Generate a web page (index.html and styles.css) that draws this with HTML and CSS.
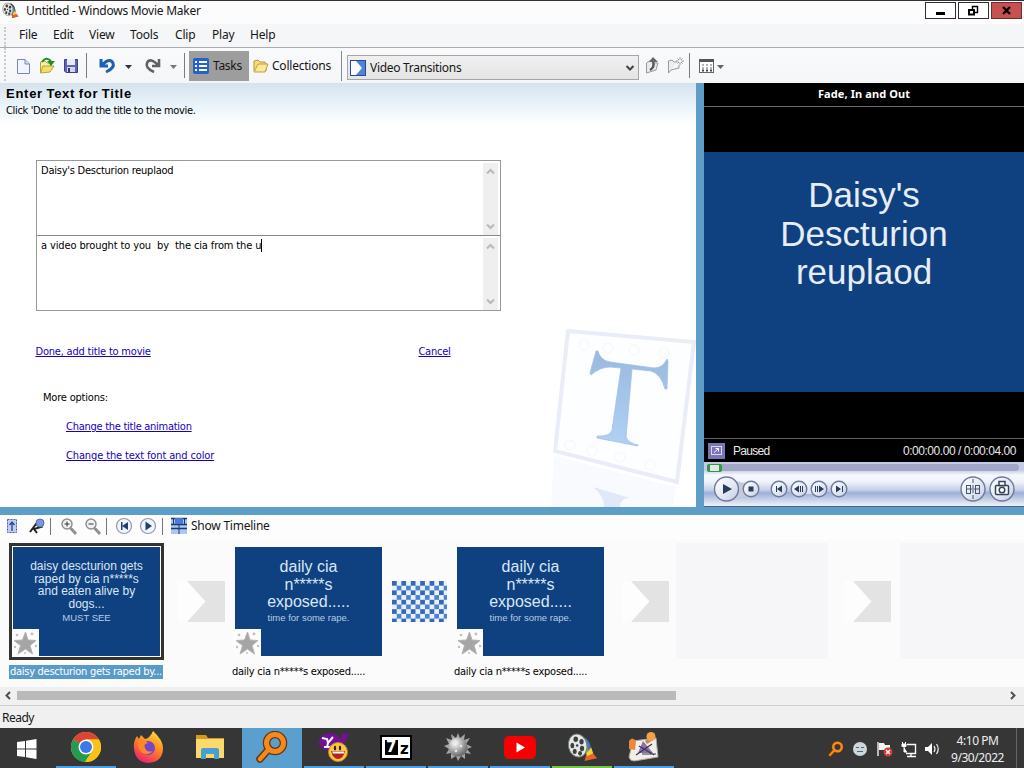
FILE: index.html
```html
<!DOCTYPE html>
<html lang="en">
<head>
<meta charset="utf-8">
<title>Untitled - Windows Movie Maker</title>
<link rel="stylesheet" href="styles.css">
</head>
<body>
<svg class="defs" width="0" height="0">
  <defs>
    <linearGradient id="silver" x1="0" y1="0" x2="1" y2="1"><stop offset="0" stop-color="#fff"/><stop offset=".55" stop-color="#e3e8f4"/><stop offset="1" stop-color="#c3cce4"/></linearGradient>
    <linearGradient id="tgrad" x1="0" y1="0" x2="0" y2="1"><stop offset="0" stop-color="#9bb9e0"/><stop offset="1" stop-color="#b0d0f4"/></linearGradient>
    <linearGradient id="fox" x1=".8" y1="0" x2=".3" y2="1"><stop offset="0" stop-color="#ffe141"/><stop offset=".45" stop-color="#ff8a1e"/><stop offset="1" stop-color="#ee1f6e"/></linearGradient>
    <radialGradient id="ball" cx=".35" cy=".3" r=".8"><stop offset="0" stop-color="#fff"/><stop offset=".5" stop-color="#a9a9a9"/><stop offset="1" stop-color="#555"/></radialGradient>
    <pattern id="check" width="9.4" height="9.4" patternUnits="userSpaceOnUse"><rect width="9.4" height="9.4" fill="#e9f1fb"/><rect width="4.7" height="4.7" fill="#3568b8"/><rect x="4.7" y="4.7" width="4.7" height="4.7" fill="#4c84d0"/></pattern>
    <symbol id="reel" viewBox="0 0 32 32">
      <path d="M11 3L18 3Q27 10 25 22L31 27L20 30Z" fill="#33383a"/>
      <path d="M16 4Q24 9 23 21L20 25Q19 12 14 5Z" fill="#6ea83c"/>
      <path d="M19 6Q26 12 25 21L22 24Q23 14 19 7Z" fill="#466fc4"/>
      <path d="M20 23L26 21L31 27L18 30Z" fill="#e8632a"/><path d="M20 22L25 16L27 22L21 25Z" fill="#f3cf38"/>
      <ellipse cx="11" cy="14" rx="9.5" ry="12" fill="#e6e8e6" stroke="#777" transform="rotate(-12 11 14)"/>
      <g fill="#3c4040"><ellipse cx="9" cy="7.5" rx="2.4" ry="2.8"/><ellipse cx="15" cy="10" rx="2.2" ry="2.8"/><ellipse cx="5.5" cy="14" rx="2" ry="2.8"/><ellipse cx="15.5" cy="17" rx="2.2" ry="2.8"/><ellipse cx="8" cy="20" rx="2.1" ry="2.7"/><ellipse cx="13.5" cy="22" rx="2" ry="2.4"/><circle cx="10.5" cy="14" r="1.3"/></g>
    </symbol>
    <symbol id="star" viewBox="0 0 27 27">
      <rect width="27" height="27" fill="#fcfcfc"/>
      <path d="M13.5 3L16 11L24 11.500L18 16.500L20.500 25L13.500 20L6 25L8.500 16.500L2 11.500L10.500 11Z" fill="#a5a5a5" stroke="#b3b3b3"/>
      <g fill="#c0c0c0"><circle cx="5" cy="6" r="1.3"/><circle cx="20" cy="5" r="1.4"/><circle cx="24" cy="17" r="1.2"/><circle cx="3" cy="18" r="1.2"/><circle cx="13" cy="24" r="1"/></g>
    </symbol>
    <symbol id="arrow" viewBox="0 0 55 41"><path d="M8 0H18L35.500 20.500L18 41H8Z" fill="#fdfdfd"/><path d="M17 0H55V41H17L35.500 20.500Z" fill="#e3e3e3"/></symbol>
    <symbol id="lens" viewBox="0 0 32 32"><path d="M4 28L13 18" stroke="#66350d" stroke-width="7.5" stroke-linecap="round"/><circle cx="19" cy="12" r="8.5" fill="none" stroke="#66350d" stroke-width="7.5"/><path d="M4 28L13 18" stroke="#f58a1c" stroke-width="4.5" stroke-linecap="round"/><circle cx="19" cy="12" r="8.5" fill="none" stroke="#f58a1c" stroke-width="5"/></symbol>
  </defs>
</svg>
<div class="window">
  <header class="titlebar">
    <svg class="app-icon" width="17" height="17"><use href="#reel"/></svg>
    <span class="title-text">Untitled - Windows Movie Maker</span>
    <div class="window-buttons">
      <span class="wbtn"><svg width="29" height="15"><rect x="10" y="9" width="9" height="3"/></svg></span>
      <span class="wbtn"><svg width="29" height="15" fill="none" stroke="#000"><path d="M13.500 6V3.500H18.500V9.500H16" stroke-width="1.4"/><rect x="10" y="7" width="5" height="4.5" stroke-width="2"/></svg></span>
      <span class="wbtn close"><svg width="29" height="15"><path d="M11 4L18 11M18 4L11 11" stroke="#000" stroke-width="2.3"/></svg></span>
    </div>
  </header>
  <nav class="menubar"><span class="m1">File</span><span class="m2">Edit</span><span class="m3">View</span><span class="m4">Tools</span><span class="m5">Clip</span><span class="m6">Play</span><span class="m7">Help</span></nav>
  <div class="toolbar">
    <svg class="tools-left" width="189" height="34">
      <path d="M17.500 11.500H25L29.500 16V25.500H17.500Z" fill="#f1f6ff" stroke="#7488b8"/><path d="M25 11.500V16H29.500" fill="#cbdcf8" stroke="#7488b8"/>
      <path d="M40.500 25V14L45 13L47 15H51V18" fill="#f9efa4" stroke="#b7a13f"/><path d="M40.500 25L43 18H54L50 24Z" fill="#f5df6c" stroke="#b7a13f"/><path d="M42 14Q46 8 51 13" fill="none" stroke="#248c29" stroke-width="2"/><path d="M47 13H55L51 18Z" fill="#248c29"/>
      <path d="M64.500 11.500H77.500V24.500H66L64.500 23Z" fill="#6264ae" stroke="#3d3f87"/><rect x="67" y="11" width="8" height="6" fill="#e6e9f8"/><rect x="67" y="19" width="8" height="5" fill="#d4d6e8"/><rect x="68" y="20" width="2" height="4" fill="#34367d"/>
      <path d="M86.500 5V30M184.500 5V30" stroke="#777b82"/>
      <path d="M101 11V18H108M102 17Q110 9 113 15Q115 20 106 24" fill="none" stroke="#1d61b8" stroke-width="3"/>
      <path d="M125 17H132L128.500 21Z" fill="#333"/>
      <path d="M159 11V18H152M158 17Q150 9 147 15Q145 20 154 24" fill="none" stroke="#606266" stroke-width="2.6"/>
      <path d="M170 17H177L173.500 21Z" fill="#777"/>
    </svg>
    <div class="tasks"><svg width="16" height="16"><rect width="16" height="16" rx="2" fill="#2460ce"/><path d="M2 4H4M2 8H4M2 12H4M6 4H14M6 8H14M6 12H14" stroke="#fff" stroke-width="2"/></svg><span>Tasks</span></div>
    <div class="collections"><svg width="16" height="15"><path d="M1 12V2L5 1L7 3H12L13 5V12Z" fill="#f9dc7e" stroke="#bd9441"/><path d="M1 13L5 5H15L12 13Z" fill="#fce999" stroke="#c79d3d"/></svg><span>Collections</span></div>
    <div class="combo"><svg width="16" height="16"><rect x=".5" y=".5" width="15" height="15" fill="#4e83d8" stroke="#244aa0"/><path d="M1 1H6L12 8L6 15H1Z" fill="#fff"/></svg><span>Video Transitions</span><svg class="chevron" width="10" height="8"><path d="M1.500 2L5 5.500L8.500 2" fill="none" stroke="#444" stroke-width="2"/></svg></div>
    <svg width="86" height="34">
      <path d="M7.500 25V15L12 12H15M7.500 25L17 22L19 15H16" fill="#e9e9e9" stroke="#999"/><path d="M11 22Q16 19 14 13" fill="none" stroke="#555" stroke-width="2.4"/><path d="M10 14L14 9L19 14Z" fill="#666"/>
      <path d="M29.500 25V13L33 12L35 14H38M29.500 25L32 22L40 20V17" fill="#eee" stroke="#999"/><path d="M41 9V17M37 13H45M38.500 10.500L43.500 15.500M43.500 10.500L38.500 15.500" stroke="#999"/><circle cx="41" cy="13" r="1.5" fill="#fff"/>
      <path d="M50.500 5V30" stroke="#777b82"/><rect x="60.500" y="12.500" width="14" height="12" fill="#fff" stroke="#666"/><path d="M60 12.500H75" stroke="#555" stroke-width="3"/><path d="M63 17H73M63 20H73" stroke="#999" stroke-width="1.5" stroke-dasharray="2"/><path d="M63 22.500H73" stroke="#444" stroke-width="2" stroke-dasharray="2"/><path d="M78 17H85L81.500 21Z" fill="#666"/>
    </svg>
  </div>
  <main class="workspace">
    <section class="task-pane">
      <svg class="watermark" width="146" height="182">
        <path d="M18 6L144 17L127 157L5 126Z" fill="#fdfeff" stroke="#e9edf8" stroke-width="4"/>
        <g fill="none" stroke="#f4f6fb"><circle cx="34" cy="20" r="5"/><circle cx="58" cy="23" r="5"/><circle cx="84" cy="25" r="5"/><circle cx="114" cy="28" r="5"/><circle cx="20" cy="120" r="5"/><circle cx="42" cy="126" r="5"/><circle cx="70" cy="132" r="5"/><circle cx="100" cy="140" r="5"/></g>
        <path d="M48 26Q50 35 60 37L104 43Q113 43 117 34L118 36L117 64H115Q111 49 101 46L82 44L76 112Q78 118 88 120V121L47 113V111Q60 112 62 105L71 43L60 42Q50 42 41 50L40 48L46 26Z" fill="url(#tgrad)" stroke="#a4bfe4" stroke-width=".8"/>
        <path d="M4 131L126 162L122 182H1Z" fill="#f3f6fc" opacity=".6"/><path d="M43 162L80 173Q70 173 70 182H54Q55 172 43 162Z" fill="#dfe9f7"/>
      </svg>
      <h1>Enter Text for Title</h1>
      <p class="hint">Click 'Done' to add the title to the movie.</p>
      <div class="fields">
        <div class="field"><span class="f1">Daisy's Descturion reuplaod</span><div class="vscroll"><svg width="9" height="7"><path d="M1 5.500L4.500 2L8 5.500"/></svg><svg width="9" height="7"><path d="M1 1.500L4.500 5L8 1.500"/></svg></div></div>
        <div class="field"><span class="f2 caret">a video brought to you&nbsp; by&nbsp; the cia from the u</span><div class="vscroll"><svg width="9" height="7"><path d="M1 5.500L4.500 2L8 5.500"/></svg><svg width="9" height="7"><path d="M1 1.500L4.500 5L8 1.500"/></svg></div></div>
      </div>
      <div class="actions"><a class="done">Done, add title to movie</a><a class="cancel">Cancel</a></div>
      <p class="more">More options:</p>
      <a class="option o1">Change the title animation</a>
      <a class="option o2">Change the text font and color</a>
    </section>
    <aside class="preview">
      <div class="preview-name"><span>Fade, In and Out</span></div>
      <div class="screen"><div class="frame"><span class="l1">Daisy's</span><span class="l2">Descturion</span><span class="l3">reuplaod</span></div></div>
      <div class="preview-status"><svg width="17" height="16"><rect width="17" height="16" fill="#7a76b5"/><rect x="3.5" y="3.5" width="10" height="8" fill="none" stroke="#d8d8f0"/><path d="M6 9.500L10.500 5.500M7.500 5.500H10.500V8.500" fill="none" stroke="#fff"/></svg><span class="paused">Paused</span><span class="time">0:00:00.00 / 0:00:04.00</span></div>
      <div class="controls">
        <svg width="320" height="44">
          <rect x="3" y="2" width="312" height="7" rx="3.5" fill="#a2a7ca"/><rect x="3" y="2" width="15" height="8" rx="2" fill="#2a9a43"/><rect x="6" y="3" width="9" height="6" fill="#e3e8e6"/>
          <path d="M28 17Q40 23 48 20V36Q39 32 28 38Z" fill="#c5cbdc"/>
          <g fill="url(#silver)" stroke="#6f7a98" stroke-width="1.4"><circle cx="22.5" cy="27" r="12"/><circle cx="47" cy="27" r="7.8"/><path d="M94 20H115V32H94Z" stroke="none"/><circle cx="75" cy="27" r="7.8"/><circle cx="95" cy="27" r="7.8"/><circle cx="115" cy="27" r="7.8"/><circle cx="135" cy="27" r="7.8"/><circle cx="269" cy="27" r="12"/><circle cx="298" cy="27" r="12"/></g>
          <g fill="#253d59"><path d="M19 22L28 27L19 32Z"/><rect x="44.5" y="24.5" width="5" height="5"/><path d="M72 24V30H73V24ZM78 23.500V30.500L73 27ZM95 23.500V30.500L90 27ZM96 24V30H97V24ZM98 24V30H99V24ZM115 23.500V30.500L120 27ZM111 24V30H112V24ZM113 24V30H114V24ZM132 23.500V30.500L137 27ZM138 24V30H139V24Z"/></g>
          <g fill="none" stroke="#46556d"><path d="M269 17V21M269 23V26M269 28V31M269 33V37M262 27H276"/><rect x="262.5" y="23.500" width="4" height="8"/><rect x="271.5" y="23.500" width="4" height="8"/></g>
          <rect x="291.5" y="23.5" width="13" height="9" rx="1" fill="#fff" stroke="#34435e" stroke-width="1.5"/><rect x="295" y="19.5" width="6" height="4" fill="#fff" stroke="#34435e" stroke-width="1.5"/><circle cx="298" cy="28" r="2.8" fill="#fff" stroke="#34435e" stroke-width="1.5"/>
        </svg>
      </div>
    </aside>
  </main>
  <div class="timeline-tools">
    <svg width="188" height="25">
      <rect x="7.5" y="4.5" width="9" height="13" fill="#c3cdf1" stroke="#4a5fa8" stroke-dasharray="2 1"/><path d="M12 16V7M9.500 10L12 7L14.500 10" fill="none" stroke="#2c4a9c" stroke-width="1.4"/>
      <path d="M30 17L36 9L41 12L34 14L37 18" fill="none" stroke="#222" stroke-width="2"/><circle cx="40" cy="8" r="4" fill="#7e96dc" stroke="#536aaa"/>
      <path d="M50.500 3V20M106.500 3V20M162.500 3V20" stroke="#777"/>
      <g fill="#f2f2f4" stroke="#909196" stroke-width="1.5"><path d="M70.500 13L76 19M94.500 13L100 19" stroke-width="3"/><circle cx="67" cy="9" r="5"/><circle cx="91" cy="9" r="5"/></g><path d="M64.500 9H69.500M67 6.500V11.500M88.500 9H93.500" stroke="#333"/>
      <g fill="#f1f5fc" stroke="#8f98ae" stroke-width="1.2"><circle cx="124" cy="11" r="7.5"/><circle cx="148" cy="11" r="7.5"/></g><path d="M121 7V15H122.500V7ZM128 7V15L122 11ZM145.500 6.500V15.500L152 11Z" fill="#244269"/>
      <rect x="171" y="3" width="16" height="16" fill="#a9c8f4"/><path d="M171 3.500H187M171 9.500H187M171 13.500H187" stroke="#1e3767" stroke-width="1.4"/><path d="M179 9V19M173.500 3V9M184.500 3V9" stroke="#1e3767"/><rect x="175" y="3" width="8" height="6" fill="#4e78d2"/>
    </svg>
    <span class="show-timeline">Show Timeline</span>
  </div>
  <section class="storyboard">
    <div class="cell"><div class="clip selected small"><span class="a1">daisy descturion gets</span><span class="a2">raped by cia n*****s</span><span class="a3">and eaten alive by</span><span class="a4">dogs...</span><small class="a5">MUST SEE</small><svg class="effect" width="27" height="27"><use href="#star"/></svg></div><p class="caption active">daisy descturion gets raped by...</p></div>
    <svg class="transition" width="55" height="41"><use href="#arrow"/></svg>
    <div class="cell"><div class="clip"><span class="b1">daily cia</span><span class="b2">n*****s</span><span class="b3">exposed.....</span><small class="b4">time for some rape.</small><svg class="effect" width="27" height="27"><use href="#star"/></svg></div><p class="caption">daily cia n*****s exposed.....</p></div>
    <svg class="transition" width="55" height="41"><rect width="55" height="41" fill="url(#check)"/></svg>
    <div class="cell"><div class="clip"><span class="b1">daily cia</span><span class="b2">n*****s</span><span class="b3">exposed.....</span><small class="b4">time for some rape.</small><svg class="effect" width="27" height="27"><use href="#star"/></svg></div><p class="caption">daily cia n*****s exposed.....</p></div>
    <svg class="transition" width="55" height="41"><use href="#arrow"/></svg>
    <div class="cell"><div class="empty"></div></div>
    <svg class="transition" width="55" height="41"><use href="#arrow"/></svg>
    <div class="cell"><div class="empty last"></div></div>
  </section>
  <div class="hscroll"><svg width="17" height="17"><path d="M10 5L6.500 8.500L10 12"/></svg><div class="thumb"></div><svg class="right" width="17" height="17"><path d="M8 5L11.500 8.500L8 12"/></svg></div>
  <div class="statusbar">Ready</div>
  <footer class="taskbar">
    <div class="start"><svg width="20" height="20"><path d="M0 3L8 2V9.500H0ZM9 1.800L19.500 0V9.500H9ZM0 10.500H8V18L0 17ZM9 10.500H19.500V20L9 18.200Z" fill="#fff"/></svg></div>
    <div class="app run"><svg width="30" height="30" viewBox="0 0 30 30"><circle cx="15" cy="15" r="15" fill="#fbc116"/><path d="M15 15L2 7.500A15 15 0 0 1 28 7.500H15Z" fill="#dc4437"/><path d="M15 15L2 7.500A15 15 0 0 0 14 30L21.500 18.500Z" fill="#269a50"/><path d="M15 7.500H28A15 15 0 0 1 14 30L21.500 18.500Z" fill="#fbc116"/><circle cx="15" cy="15" r="7.5" fill="#fff"/><circle cx="15" cy="15" r="6" fill="#3979e8"/></svg></div>
    <div class="app"><svg width="31" height="32"><path d="M1 17Q0 11 4 5L6 8L8 4L12 8Q17 7 20 0Q30 9 30 17Q30 31 15 32Q2 31 1 17Z" fill="url(#fox)"/><circle cx="15" cy="17" r="7" fill="#7446c9"/><path d="M5 10Q12 8 15 12Q10 13 12 17Q14 22 20 20Q15 26 8 21Q4 16 5 10Z" fill="#ff8728"/></svg></div>
    <div class="app"><svg width="29" height="26"><path d="M0 1H10L12 4H28V12H0Z" fill="#d49b20"/><path d="M0 5H28V24H0Z" fill="#fcd96c"/><path d="M5 25V16Q5 14 7 14H21Q23 14 23 16V25H18V20H10V25Z" fill="#45a0d4"/></svg></div>
    <div class="app current"><svg width="32" height="32"><use href="#lens"/></svg></div>
    <div class="app run"><svg width="30" height="32"><ellipse cx="11" cy="11" rx="11" ry="9" fill="#731093"/><path d="M23 3L30 2L25 14L21 13Z" fill="#731093"/><path d="M3 7L8 8L9 12L14 6M9 12L8 16M5 16H11" fill="none" stroke="#fff" stroke-width="2"/><circle cx="19" cy="21" r="9.5" fill="#f6c941" stroke="#c98322"/><ellipse cx="16" cy="17" rx="1.2" ry="2.5" fill="#302414"/><ellipse cx="21" cy="17" rx="1.2" ry="2.5" fill="#302414"/><path d="M12 20H26Q24 28 19 28Q14 28 12 20Z" fill="#b91f24"/><path d="M13 20.500H25V22.500H14Z" fill="#fff"/></svg></div>
    <div class="app run"><svg width="32" height="25"><rect x="1" y="1" width="30" height="23" fill="#fff" stroke="#000" stroke-width="2"/><rect x="5" y="5" width="13" height="15"/></svg><span class="seven">7</span><span class="zed">z</span></div>
    <div class="app run"><svg width="28" height="28"><path d="M14 0L16 5L21 1L20 7L26 5L22 11L28 14L23 16L27 21L21 20L21 26L17 23L14 28L12 23L7 26V20L2 21L5 16L0 13L5 11L2 5L8 7L7 1L12 5Z" fill="#a4a4a4"/><circle cx="14" cy="14" r="9.5" fill="url(#ball)"/><g fill="#e9e9e9"><circle cx="11" cy="10" r="1.2"/><circle cx="17" cy="13" r="1.2"/><circle cx="12" cy="18" r="1.2"/></g></svg></div>
    <div class="app run"><svg width="32" height="23"><rect width="32" height="23" rx="5" fill="#f50000"/><path d="M12.500 6.500L21 11.500L12.500 16.500Z" fill="#fff"/></svg></div>
    <div class="app run green"><svg width="31" height="31"><use href="#reel"/></svg></div>
    <div class="app run"><svg width="32" height="30"><path d="M5 9L28 6L30 25L6 29Q2 29 1 25Z" fill="#f2eee7" stroke="#aaa"/><path d="M1 9Q4 4 8 9L7 18L1 17Z" fill="#e98a39"/><path d="M10 21L15 9L25 21Z" fill="#8c70a6"/><path d="M8 23L24 12M11 14L26 23M14 22H28" stroke="#35315b" stroke-width="1.2"/><path d="M17 9L25 3L27 7L19 12Z" fill="#c38b4b"/><circle cx="23" cy="4.5" r="4.5" fill="#f2a34a"/></svg></div>
    <div class="tray">
      <svg width="118" height="22"><svg x="1" y="3" width="16" height="16"><use href="#lens"/></svg>
        <circle cx="33" cy="11" r="7" fill="#cbd6dd"/><path d="M29 9.500H32M34 9.500H37M30 13.500H36" fill="none" stroke="#5a666d"/>
        <path d="M51 4V18" stroke="#fff" stroke-width="1.3"/><path d="M52 5H57L58 7H63V12H52Z" fill="#f5f5f5"/><circle cx="61" cy="14" r="4.5" fill="#d33b3b"/><path d="M59 12L63 16M63 12L59 16" stroke="#fff" stroke-width="1.3"/>
        <path d="M80 6.500H88.500V15.500H79M84 15.500V18.500M80 18.500H89" fill="none" stroke="#fff" stroke-width="1.4"/><path d="M75 6H79V8.500H75ZM75.500 4V6M78.500 4V6M77 9V14H80" fill="#fff" stroke="#fff"/>
        <path d="M98 9H101L105 5V17L101 13H98Z" fill="#fff"/><path d="M107 8Q109 11 107 14M109.500 6Q113 11 109.500 16" fill="none" stroke="#eee" stroke-width="1.2"/></svg>
    </div>
    <div class="clock"><span class="c1">4:10 PM</span><span class="c2">9/30/2022</span></div>
    <div class="peek"></div>
  </footer>
</div>
</body>
</html>
```
FILE: styles.css
```css
* { box-sizing: border-box; }
body { margin: 0; overflow: hidden; font: 12px/16px "Noto Sans", sans-serif; color: #161616; }
p, h1 { margin: 0; }
svg { display: block; flex: none; }
span, a, .caption { white-space: nowrap; }
.defs { position: absolute; }
.window { width: 1024px; height: 768px; display: flex; flex-direction: column; background: #fff; }
.window > * { flex: none; }

.titlebar { height: 24px; border-top: 1px solid #333137; background: #fcfcfd; display: flex; padding: 1px 2px 0; }
.app-icon { margin-right: 7px; }
.title-text { line-height: 18px; letter-spacing: -.26px; }
.window-buttons { margin-left: auto; display: flex; gap: 2px; }
.wbtn { width: 31px; height: 17px; border: 1px solid #302e34; background: #fff; }
.wbtn.close { background: #c75050; border-color: #702c2f; }

.menubar { height: 24px; border-bottom: 1px solid #a9abae; background: #f4f6f8; display: flex; padding: 3px 0 0 19px; letter-spacing: -.2px; }
.menubar span { height: 16px; }
.m1 { width: 34px; } .m2 { width: 36px; } .m3 { width: 41px; } .m4 { width: 45px; } .m5 { width: 37px; } .m6 { width: 38px; }

.toolbar { height: 35px; background: linear-gradient(#f9fafb, #f4f6f8); display: flex; }
.menubar::before, .toolbar::before { content: ""; width: 0; border-left: 2px dotted #c6c9ce; }
.menubar::before { height: 20px; margin-left: -15px; margin-right: 13px; }
.toolbar::before { height: 33px; margin-left: 4px; margin-right: -6px; }
.tasks { width: 60px; height: 30px; margin-top: 3px; background: #9d9d9d; display: flex; align-items: center; gap: 4px; padding-left: 4px; letter-spacing: -.3px; }
.collections { width: 93px; margin-top: 3px; height: 30px; display: flex; align-items: center; gap: 3px; padding-left: 4px; border-right: 1px solid #85888d; }
.collections span { letter-spacing: -.22px; }
.combo { width: 292px; height: 25px; margin: 7px 0 0 5px; border: 1px solid #a5a5a8; background: linear-gradient(#f0f0f0, #e4e4e4); display: flex; align-items: center; gap: 4px; padding: 0 3px 0 2px; }
.combo span { letter-spacing: -.3px; }
.combo .chevron { margin-left: auto; }
.menubar .m1 { margin-left: 0; }

.workspace { height: 424px; display: grid; grid-template-columns: 696px 320px; column-gap: 8px; background: #5e9dc8; }
.task-pane { position: relative; background: linear-gradient(#d5e3ed, #e9f3f9 22px, #fff 42px); font: 11px/14px "DejaVu Sans Condensed", "DejaVu Sans", sans-serif; color: #000; }
.watermark { position: absolute; right: 0; bottom: 0; }
h1 { font: bold 13px/16px "Liberation Sans", sans-serif; padding: 3px 0 0 6px; letter-spacing: .73px; word-spacing: -.8px; }
.hint { padding: 2px 0 0 6px; letter-spacing: -.34px; }
.fields { width: 465px; margin: 42px 0 0 36px; border: 1px solid #979899; }
.field { height: 74px; display: flex; justify-content: space-between; padding: 2px 2px 0 4px; background: #fff; }
.field + .field { height: 75px; border-top: 1px solid #88898b; }
.field span { margin-top: 1px; }
.caret { border-right: 1px solid #000; height: 13px; }
.vscroll { width: 15px; background: #efefef; display: flex; flex-direction: column; justify-content: space-between; align-items: center; padding: 5px 0; }
.vscroll path { fill: none; stroke: #b9b9b9; stroke-width: 2; }
.f1 { letter-spacing: -.24px; } .f2 { letter-spacing: -.12px; }
a { color: #1500bf; text-decoration: underline; }
.actions { margin: 34px 0 0 35.500px; width: 415px; display: flex; justify-content: space-between; }
.done, .more { letter-spacing: -.2px; }
.cancel { letter-spacing: -.25px; }
.more { padding: 32px 0 0 43px; }
.option { display: block; width: max-content; margin: 15px 0 0 66px; letter-spacing: -.27px; }
.o2 { letter-spacing: -.13px; }

.preview { background: #000; color: #fff; display: flex; flex-direction: column; height: 424px; }
.preview-name { height: 24px; border-bottom: 1px solid #6a6a6a; font: bold 11px/22px "Noto Sans", sans-serif; text-align: center; letter-spacing: .1px; }
.screen { height: 331px; padding: 45px 0; }
.frame { height: 240px; background: #0f4080; display: flex; flex-direction: column; align-items: center; padding-top: 24px; font: 35px/38.700px "Liberation Sans", sans-serif; color: #e6edf6; }
.preview-status { height: 24px; border-top: 1px solid #626262; display: flex; align-items: center; padding: 0 8px 0 4px; font: 12px/16px "Liberation Sans", sans-serif; color: #e8e8e8; }
.paused { margin-left: 8px; letter-spacing: -.75px; }
.paused { letter-spacing: -.7px; word-spacing: 0; }
.time { margin-left: auto; letter-spacing: -.45px; }
.controls { height: 45px; border-bottom: 1px solid #53627e; background: linear-gradient(#c4c9e4, #c4cae4 8px, #f6f8fd 13px, #eef2fb 20px, #c6cfe8 28px, #9dafd8 31px, #e8eef9 43px); }

.timeline-tools { height: 33px; border-top: 8px solid #5e9dc8; background: #fdfdfd; display: flex; }
.show-timeline { margin-left: 3px; line-height: 22px; letter-spacing: -.24px; }

.storyboard { height: 147px; background: #fbfbfb; display: flex; padding: 7px 0 0 13px; overflow: hidden; }
.cell { width: 147px; flex: none; }
.clip { position: relative; height: 109px; background: #0f4080; color: #d9e7f6; display: flex; flex-direction: column; align-items: center; font: 16px/17.500px "Liberation Sans", sans-serif; padding-top: 11px; }
.clip.small { font-size: 12px; line-height: 12.700px; padding-top: 13px; }
.clip small { font-size: 9.500px; line-height: 13px; color: #b7cde6; }
.selected { box-shadow: 0 0 0 1px #fff, 0 0 0 4px #333; }
.effect { position: absolute; left: -1px; bottom: 0; }
.caption { margin: 9px 0 0 -4px; width: 154px; height: 14px; font: 11px/14px "DejaVu Sans Condensed", "DejaVu Sans", sans-serif; letter-spacing: -.26px; color: #000; padding-left: 1px; }
.caption.active { background: #599bc8; color: #fff; letter-spacing: -.28px; }
.transition { margin: 34px 10px 0; }
.empty { width: 152px; height: 116px; margin: -4px 0 0 -3px; background: #f6f6f8; }
.empty.last { margin-left: -1px; }

.hscroll { height: 18px; background: #f0f0f0; display: flex; }
.hscroll path { fill: none; stroke: #505050; stroke-width: 2; }
.thumb { width: 659px; height: 9px; margin-top: 4px; background: #bababa; }
.hscroll .right { margin-left: auto; margin-right: 4px; }
.statusbar { height: 23px; background: #f0f0f0; border-top: 1px solid #d0d0d0; padding: 4px 0 0 2px; letter-spacing: -.5px; }

.taskbar { height: 40px; background: #363636; display: flex; gap: 2px; color: #fff; }
.start { width: 54px; padding: 11px 0 0 17px; }
.app { width: 60px; height: 40px; display: flex; align-items: center; justify-content: center; border-bottom: 2px solid transparent; position: relative; }
.run { border-color: #4f9fe4; }
.green { border-color: #78c24e; }
.current { background: #5b9fce; }
.seven, .zed { position: absolute; font: bold 15px/18px "DejaVu Sans", sans-serif; }
.seven { left: 20px; top: 10px; color: #fff; }
.zed { left: 34px; top: 12px; color: #000; }
.tray { margin-left: auto; padding-top: 10px; }
.clock { width: 67px; display: flex; flex-direction: column; align-items: center; padding: 4px 6px 0 0; line-height: 17px; letter-spacing: -.45px; color: #eee; }
.peek { width: 8px; border-left: 1px solid #666; }
```
